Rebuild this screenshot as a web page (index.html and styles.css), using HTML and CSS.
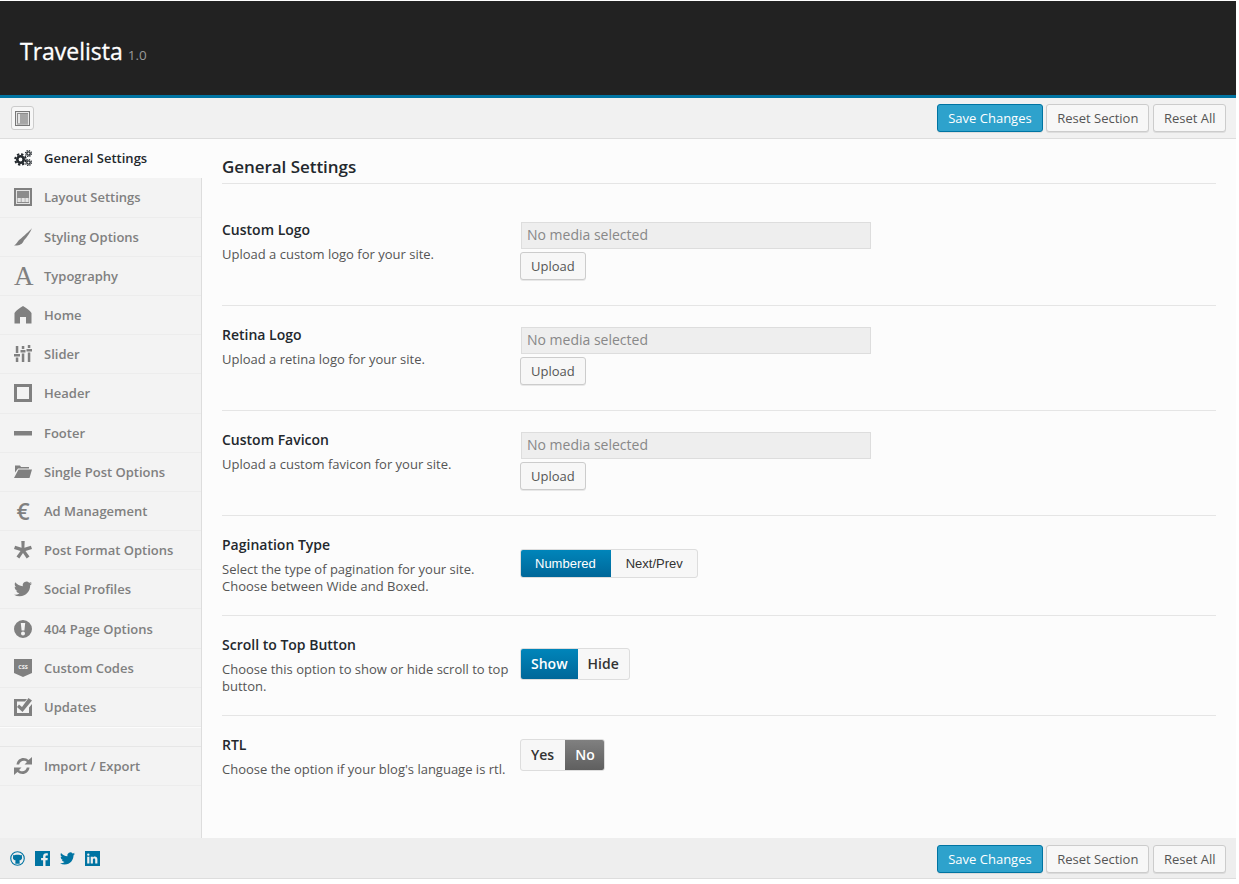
FILE: index.html
```html
<!DOCTYPE html>
<html lang="en">
<head>
  <meta charset="UTF-8">
  <title>Travelista Options</title>
  <link rel="stylesheet" href="styles.css">
</head>
<body>
  <div class="panel">
    <header class="masthead">
      <h1 class="brand">Travelista <small>1.0</small></h1>
    </header>

    <div class="bar bar-top">
      <button class="collapse" aria-label="Toggle sidebar">
        <svg viewBox="0 0 15 15" width="15" height="15"><rect width="15" height="15" fill="#777777"/><rect x="1" y="1" width="13" height="13" fill="#e6e6e6"/><rect x="5" y="3" width="8" height="9.500" fill="#a6a6a6"/><rect x="2" y="2" width="11" height="1" fill="#8c8c8c"/><rect x="2" y="3" width="1" height="9.500" fill="#8c8c8c"/><rect x="2" y="12.500" width="11" height="1" fill="#8c8c8c"/></svg>
      </button>
      <div class="actions">
        <button class="btn btn-primary">Save Changes</button>
        <button class="btn">Reset Section</button>
        <button class="btn">Reset All</button>
      </div>
    </div>

    <div class="body">
      <nav class="sidebar">
        <a class="nav-item active">
          <svg class="icon" viewBox="0 0 18 18"><g fill="none" stroke="#23282d"><circle cx="6.500" cy="10.500" r="3.200" stroke-width="2.600"/><circle cx="6.500" cy="10.500" r="5.300" stroke-width="2" stroke-dasharray="2.300 1.860"/><circle cx="14.500" cy="4.500" r="1.700" stroke-width="1.300"/><circle cx="14.500" cy="4.500" r="3" stroke-width="1.200" stroke-dasharray="1.300 1.050"/><circle cx="14.500" cy="13.500" r="1.700" stroke-width="1.300"/><circle cx="14.500" cy="13.500" r="3" stroke-width="1.200" stroke-dasharray="1.300 1.050"/></g></svg>
          General Settings
        </a>
        <a class="nav-item">
          <svg class="icon" viewBox="0 0 18 18"><rect width="18" height="18" fill="#808080"/><rect x="2" y="2" width="14" height="14" fill="#e4e4e4"/><rect x="3" y="3" width="12" height="12" fill="#8c8c8c"/><rect x="3.500" y="10" width="3.300" height="4" fill="#e4e4e4"/><rect x="7.500" y="10" width="3.300" height="4" fill="#e4e4e4"/><rect x="11.300" y="10" width="3.300" height="4" fill="#e4e4e4"/></svg>
          Layout Settings
        </a>
        <a class="nav-item">
          <svg class="icon" viewBox="0 0 18 18"><path fill="#808080" d="M18 0c-1 1.500-6 6-11 10.500C4 12 3.500 15.500 0 17.500c4.500.5 8.500-1 9.800-5C13 9 16.500 4 18 0z"/></svg>
          Styling Options
        </a>
        <a class="nav-item">
          <span class="icon icon-serif">A</span>
          Typography
        </a>
        <a class="nav-item">
          <svg class="icon" viewBox="0 0 18 18"><path fill="#808080" d="M9 0c3 2 7 4 8.500 7v10.500H12V11H6v6.500H.5V7C2 4 6 2 9 0z"/></svg>
          Home
        </a>
        <a class="nav-item">
          <svg class="icon" viewBox="0 0 18 18"><path fill="#808080" d="M1.800 1h2.500v7H1.800zM0 9h6v2.500H0zM1.800 12.500h2.500V17H1.800zM7.800 1h2.500v3H7.800zM6.500 5h5v2.500h-5zM7.800 8.500h2.500V17H7.800zM13.800 0h2.500v3h-2.500zM12.500 4H18v2.500h-5.500zM13.800 7.500h2.500V17h-2.500z"/></svg>
          Slider
        </a>
        <a class="nav-item">
          <svg class="icon" viewBox="0 0 18 18"><path fill="#808080" fill-rule="evenodd" d="M0 0h18v18H0zM3 3v12h12V3z"/></svg>
          Header
        </a>
        <a class="nav-item">
          <svg class="icon" viewBox="0 0 18 18"><rect fill="#808080" x="0" y="7" width="18" height="4.500"/></svg>
          Footer
        </a>
        <a class="nav-item">
          <svg class="icon" viewBox="0 0 18 18"><path fill="#808080" d="M1 2.500h5l1 1.500h8v1.500H4L1 9.500zM4.500 6.500H18L15.500 15H0z"/></svg>
          Single Post Options
        </a>
        <a class="nav-item">
          <span class="icon icon-euro">€</span>
          Ad Management
        </a>
        <a class="nav-item">
          <svg class="icon" viewBox="0 0 18 18"><path fill="#808080" d="M7.300 0h3.400l-.3 6.800 6.500-2 1.100 3.200-6.500 2.100 4 5.500-2.800 2L9 12l-3.700 5.600-2.800-2 4-5.500L0 8l1.100-3.200 6.500 2z"/></svg>
          Post Format Options
        </a>
        <a class="nav-item">
          <svg class="icon" viewBox="0 0 24 24"><path fill="#808080" d="M23.953 4.570a10 10 0 01-2.825.775 4.958 4.958 0 002.163-2.723c-.951.555-2.005.959-3.127 1.184a4.920 4.920 0 00-8.384 4.482C7.690 8.095 4.067 6.130 1.640 3.162a4.822 4.822 0 00-.666 2.475c0 1.710.870 3.213 2.188 4.096a4.904 4.904 0 01-2.228-.616v.060a4.923 4.923 0 003.946 4.827 4.996 4.996 0 01-2.212.085 4.936 4.936 0 004.604 3.417 9.867 9.867 0 01-6.102 2.105c-.390 0-.779-.023-1.170-.067a13.995 13.995 0 007.557 2.209c9.053 0 13.998-7.496 13.998-13.985 0-.210 0-.420-.015-.630A9.935 9.935 0 0024 4.590z"/></svg>
          Social Profiles
        </a>
        <a class="nav-item">
          <svg class="icon" viewBox="0 0 18 18"><path fill="#808080" fill-rule="evenodd" d="M9 0a9 9 0 110 18A9 9 0 019 0zM6.800 3l.8 7.500h2.800l.8-7.500zM9 11.500a2 2 0 100 4 2 2 0 000-4z"/></svg>
          404 Page Options
        </a>
        <a class="nav-item">
          <svg class="icon" viewBox="0 0 18 18"><path fill="#808080" d="M0 0h18v14l-9 4-9-4z"/><text class="css-mark" x="9" y="9.500" text-anchor="middle">CSS</text></svg>
          Custom Codes
        </a>
        <a class="nav-item">
          <svg class="icon" viewBox="0 0 18 18"><path fill="#808080" d="M0 1h13l-2 2.500H3v11.500h12v-5.500l3-3.500V18H0zM5 6.500l3 2.500 6.500-9L18 2.500 8.500 14 3 9z"/></svg>
          Updates
        </a>
        <div class="nav-gap"></div>
        <a class="nav-item">
          <svg class="icon" viewBox="0 0 18 18"><path fill="#808080" d="M2.500 7.500C3 3.500 6 1 9.500 1c2 0 3.800.8 5 2L18 0v7.500h-7.500l2.500-2.500c-.8-.8-2-1.300-3.300-1.300-2.300 0-4 1.500-4.500 3.800zM15.500 10.500C15 14.500 12 17 8.500 17c-2 0-3.800-.8-5-2L0 18v-7.500h7.500L5 13c.8.8 2 1.300 3.300 1.300 2.300 0 4-1.500 4.500-3.800z"/></svg>
          Import / Export
        </a>
      </nav>

      <main class="content">
        <h2 class="section-title">General Settings</h2>

        <div class="option option-first">
          <div class="option-text">
            <h3>Custom Logo</h3>
            <p>Upload a custom logo for your site.</p>
          </div>
          <div class="option-field field-media">
            <input class="media-input" type="text" disabled placeholder="No media selected">
            <button class="btn btn-upload">Upload</button>
          </div>
        </div>

        <div class="option">
          <div class="option-text">
            <h3>Retina Logo</h3>
            <p>Upload a retina logo for your site.</p>
          </div>
          <div class="option-field field-media">
            <input class="media-input" type="text" disabled placeholder="No media selected">
            <button class="btn btn-upload">Upload</button>
          </div>
        </div>

        <div class="option">
          <div class="option-text">
            <h3>Custom Favicon</h3>
            <p>Upload a custom favicon for your site.</p>
          </div>
          <div class="option-field field-media">
            <input class="media-input" type="text" disabled placeholder="No media selected">
            <button class="btn btn-upload">Upload</button>
          </div>
        </div>

        <div class="option">
          <div class="option-text">
            <h3>Pagination Type</h3>
            <p>Select the type of pagination for your site.<br>Choose between Wide and Boxed.</p>
          </div>
          <div class="option-field field-pagination">
            <div class="toggle toggle-arial">
              <span class="toggle-on">Numbered</span>
              <span>Next/Prev</span>
            </div>
          </div>
        </div>

        <div class="option">
          <div class="option-text">
            <h3>Scroll to Top Button</h3>
            <p>Choose this option to show or hide scroll to top button.</p>
          </div>
          <div class="option-field field-scroll">
            <div class="toggle">
              <span class="toggle-on">Show</span>
              <span>Hide</span>
            </div>
          </div>
        </div>

        <div class="option option-last">
          <div class="option-text">
            <h3>RTL</h3>
            <p>Choose the option if your blog's language is rtl.</p>
          </div>
          <div class="option-field field-rtl">
            <div class="toggle">
              <span>Yes</span>
              <span class="toggle-off">No</span>
            </div>
          </div>
        </div>
      </main>
    </div>

    <div class="bar bar-bottom">
      <div class="social">
        <svg viewBox="0 0 16 16" width="15" height="15"><circle cx="8" cy="8" r="7.200" fill="none" stroke="#0074a2" stroke-width="1.200"/><path fill="#0074a2" d="M3.500 4l1.500.5C6 4 10 4 11 4.500L12.500 4l.3 2.500c.4 1.800-.5 3.500-3 3.800.4.4.5.8.5 1.200v2h-4.600v-2c0-.4.100-.8.500-1.200-2.500-.3-3.400-2-3-3.800z"/></svg>
        <svg viewBox="0 0 15 15" width="15" height="15"><path fill="#0074a2" d="M0 0h15v15h-4.500V9.200h2l.3-2.300h-2.300V5.500c0-.7.200-1.100 1.100-1.100h1.200V2.300c-.2 0-.9-.1-1.700-.1-1.800 0-3 1.100-3 3.100v1.600h-2v2.300h2V15H0z"/></svg>
        <svg viewBox="0 0 24 24" width="15" height="15"><path fill="#0074a2" d="M23.953 4.570a10 10 0 01-2.825.775 4.958 4.958 0 002.163-2.723c-.951.555-2.005.959-3.127 1.184a4.920 4.920 0 00-8.384 4.482C7.690 8.095 4.067 6.130 1.640 3.162a4.822 4.822 0 00-.666 2.475c0 1.710.870 3.213 2.188 4.096a4.904 4.904 0 01-2.228-.616v.060a4.923 4.923 0 003.946 4.827 4.996 4.996 0 01-2.212.085 4.936 4.936 0 004.604 3.417 9.867 9.867 0 01-6.102 2.105c-.390 0-.779-.023-1.170-.067a13.995 13.995 0 007.557 2.209c9.053 0 13.998-7.496 13.998-13.985 0-.210 0-.420-.015-.630A9.935 9.935 0 0024 4.590z"/></svg>
        <svg viewBox="0 0 15 15" width="15" height="15"><path fill="#0074a2" fill-rule="evenodd" d="M0 0h15v15H0zM2.200 5.700v6.800h2.200V5.700zM3.300 2.400a1.200 1.200 0 100 2.400 1.200 1.200 0 000-2.400zM5.700 5.700v6.800h2.200V8.800c0-1 .5-1.400 1.200-1.400s1.100.5 1.100 1.400v3.700h2.200V8.400c0-2-1.100-2.900-2.500-2.900-1 0-1.700.5-2 1.100v-.9z"/></svg>
      </div>
      <div class="actions">
        <button class="btn btn-primary">Save Changes</button>
        <button class="btn">Reset Section</button>
        <button class="btn">Reset All</button>
      </div>
    </div>
  </div>
</body>
</html>
```

FILE: styles.css
```css
* {
  box-sizing: border-box;
  margin: 0;
  padding: 0;
}

body {
  font-family: 'Open Sans', sans-serif;
  font-size: 13px;
  color: #555;
  background-color: #ffffff;
  padding: 1px 3px 5px 0;
}

.panel {
  height: 878px;
  display: flex;
  flex-direction: column;
}

.masthead {
  height: 97px;
  flex: none;
  background-color: #222222;
  border-bottom: 3px solid #0074a2;
  padding: 34px 20px 0;
}

.brand {
  font-size: 23px;
  font-weight: 400;
  line-height: 33px;
  color: #ffffff;
  -webkit-text-stroke: 0.3px #ffffff;
}

.brand small {
  margin-left: -1px;
  font-size: 13.500px;
  font-weight: 400;
  color: #999999;
  -webkit-text-stroke: 0;
}

.bar {
  flex: none;
  display: flex;
  align-items: center;
  justify-content: space-between;
  background-color: #f1f1f1;
  padding: 0 10px 0 11px;
}

.bar-top {
  height: 41px;
  border-bottom: 1px solid #dddddd;
}

.bar-bottom {
  height: 41px;
  background-color: #eeeeee;
  border-bottom: 1px solid #dddddd;
  padding: 1px 10px 0 10px;
}

.social {
  display: flex;
  gap: 10px;
}

.collapse {
  width: 23px;
  height: 24px;
  display: flex;
  align-items: center;
  justify-content: center;
  background-color: #f7f7f7;
  border: 1px solid #cccccc;
  border-radius: 3px;
}

.actions {
  display: flex;
  gap: 3px;
}

.btn {
  height: 28px;
  padding: 0 10px;
  font-family: 'Open Sans', sans-serif;
  font-size: 13px;
  line-height: 26px;
  color: #555555;
  background-color: #f7f7f7;
  border: 1px solid #cccccc;
  border-radius: 3px;
  box-shadow: 0 1px 0 rgba(0, 0, 0, 0.08);
}

.btn-primary {
  padding: 0 10.500px;
  color: #ffffff;
  background-color: #2ea2cc;
  border-color: #0074a2;
}

.actions .btn:last-child {
  margin-left: 1px;
  padding: 0 9.500px;
}

.body {
  flex: 1;
  display: flex;
  min-height: 0;
}

.sidebar {
  width: 202px;
  flex: none;
  background-color: #f3f3f3;
  border-right: 1px solid #dddddd;
}

.nav-item {
  height: 39.200px;
  display: flex;
  align-items: center;
  padding-left: 14px;
  font-weight: 600;
  color: #808080;
  border-bottom: 1px solid #ececec;
}

.nav-item.active {
  height: 39.400px;
  margin-right: -1px;
  padding-bottom: 2px;
  color: #23282d;
  background-color: #fcfcfc;
  border-bottom: none;
}

.nav-gap {
  height: 20px;
  border-top: 1px solid #fcfcfc;
  border-bottom: 1px solid #e6e6e6;
}

.icon {
  width: 18px;
  height: 18px;
  flex: none;
  margin-right: 12px;
}

.icon-serif {
  font-family: 'Liberation Serif', serif;
  font-size: 27px;
  font-weight: 400;
  line-height: 18px;
  text-align: center;
  color: #808080;
}

.icon-euro {
  font-size: 23px;
  font-weight: 600;
  line-height: 18px;
  text-align: center;
  color: #808080;
}

.css-mark {
  font-family: 'Open Sans', sans-serif;
  font-size: 5.500px;
  font-weight: 700;
  fill: #f3f3f3;
}

.content {
  flex: 1;
  background-color: #fcfcfc;
  padding: 16px 20px 0;
}

.section-title {
  height: 29px;
  font-size: 17px;
  font-weight: 600;
  letter-spacing: -0.05px;
  line-height: 24px;
  color: #23282d;
  border-bottom: 1px solid #e5e5e5;
}

.option {
  display: flex;
  padding: 19px 0 20px;
  border-bottom: 1px solid #e5e5e5;
}

.option-first {
  margin-top: 17px;
}

.option-last {
  border-bottom: none;
}

.option-text {
  width: 298px;
  flex: none;
  padding-right: 5px;
  line-height: 17px;
}

.option-text h3 {
  font-size: 14px;
  font-weight: 600;
  line-height: 20px;
  color: #23282d;
  margin-bottom: 6px;
}

.field-media {
  display: flex;
  flex-direction: column;
  align-items: flex-start;
  padding-top: 2px;
}

.media-input {
  width: 350px;
  height: 27px;
  padding: 0 5px 2px;
  font-family: 'Open Sans', sans-serif;
  font-size: 14px;
  background-color: #eeeeee;
  border: 1px solid #dddddd;
  margin-left: 1px;
}

.media-input::placeholder {
  color: #888888;
}

.btn-upload {
  margin: 3px 0 5px;
}

.field-pagination {
  padding-top: 14px;
}

.field-scroll {
  padding-top: 13px;
}

.field-rtl {
  padding-top: 4px;
}

.toggle {
  display: inline-flex;
  font-size: 14px;
  font-weight: 600;
  line-height: 30px;
  color: #333333;
  background-color: #f7f7f7;
  border: 1px solid #dddddd;
  border-radius: 3px;
  overflow: hidden;
}

.toggle span {
  padding: 0 10px;
}

.toggle-arial {
  font-family: 'Liberation Sans', sans-serif;
  font-size: 13px;
  font-weight: 400;
  line-height: 27px;
}

.toggle-arial span {
  padding: 0 14px 0 15px;
}

.toggle-arial span.toggle-on {
  padding: 0 15px 0 14px;
}

.toggle .toggle-on {
  color: #ffffff;
  background: linear-gradient(#0085ba, #006799);
}

.toggle .toggle-off {
  margin-left: 1px;
  padding: 0 9px 0 10px;
  color: #ffffff;
  background: linear-gradient(#808080, #5f5f5f);
}
```
